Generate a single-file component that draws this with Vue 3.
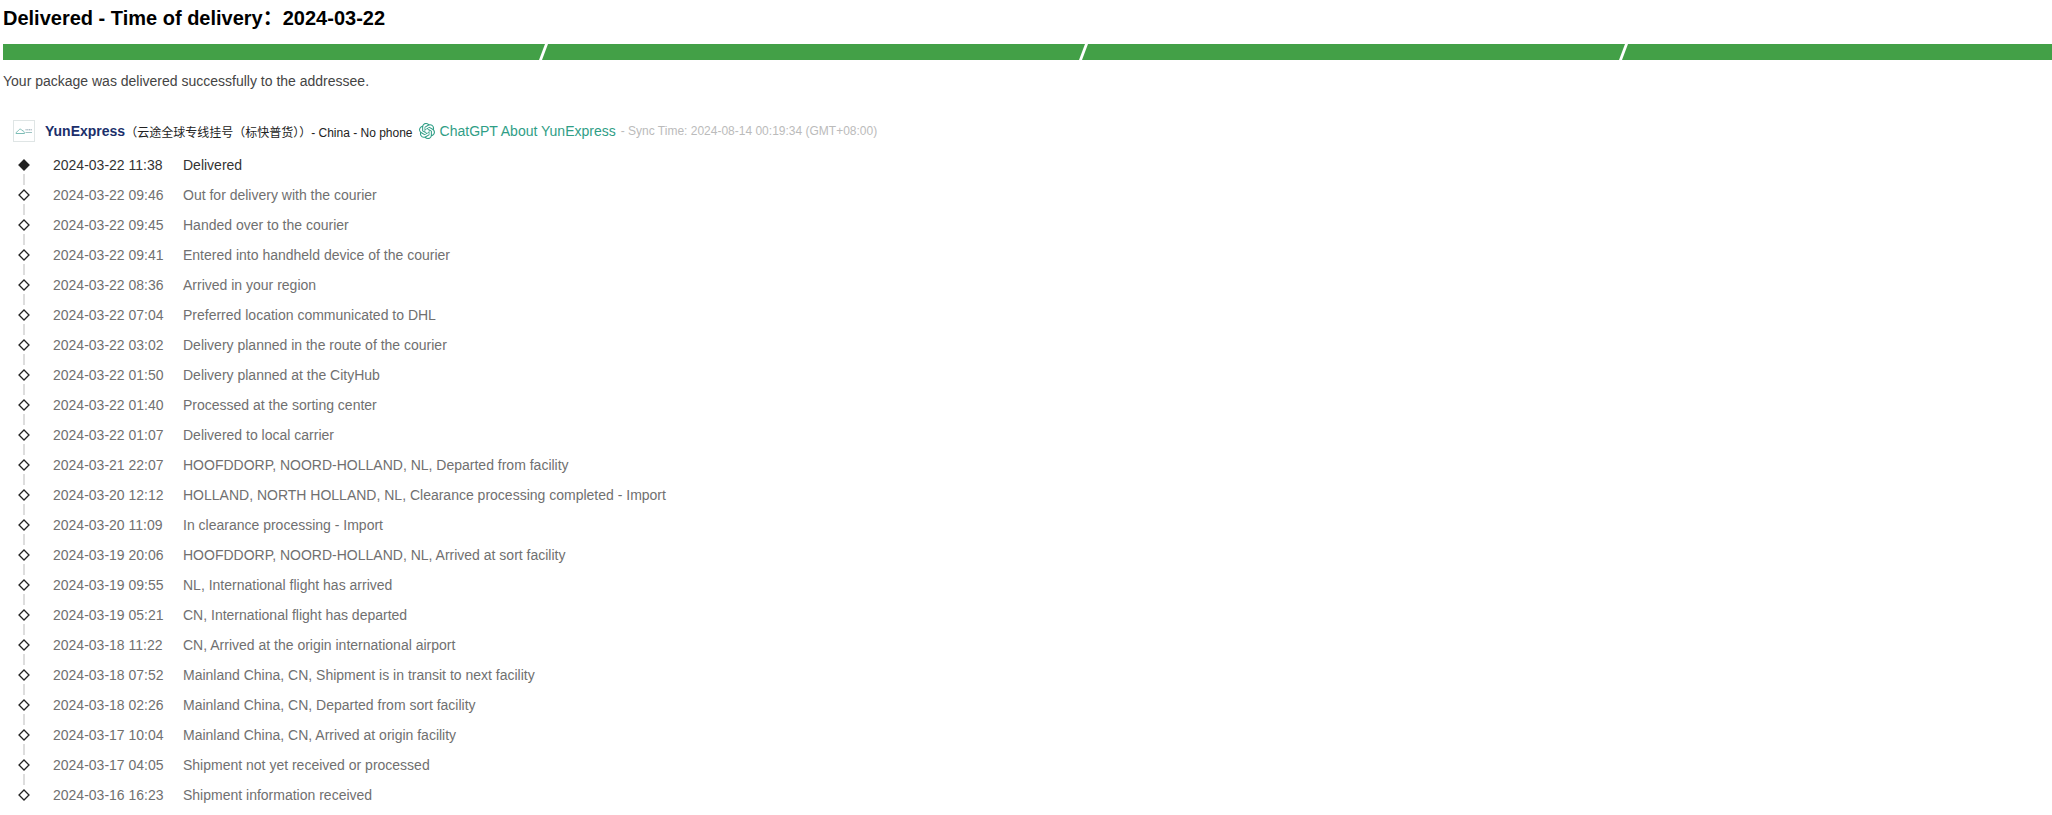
<script setup>
const rows = [
  ['2024-03-22 11:38', 'Delivered'],
  ['2024-03-22 09:46', 'Out for delivery with the courier'],
  ['2024-03-22 09:45', 'Handed over to the courier'],
  ['2024-03-22 09:41', 'Entered into handheld device of the courier'],
  ['2024-03-22 08:36', 'Arrived in your region'],
  ['2024-03-22 07:04', 'Preferred location communicated to DHL'],
  ['2024-03-22 03:02', 'Delivery planned in the route of the courier'],
  ['2024-03-22 01:50', 'Delivery planned at the CityHub'],
  ['2024-03-22 01:40', 'Processed at the sorting center'],
  ['2024-03-22 01:07', 'Delivered to local carrier'],
  ['2024-03-21 22:07', 'HOOFDDORP, NOORD-HOLLAND, NL, Departed from facility'],
  ['2024-03-20 12:12', 'HOLLAND, NORTH HOLLAND, NL, Clearance processing completed - Import'],
  ['2024-03-20 11:09', 'In clearance processing - Import'],
  ['2024-03-19 20:06', 'HOOFDDORP, NOORD-HOLLAND, NL, Arrived at sort facility'],
  ['2024-03-19 09:55', 'NL, International flight has arrived'],
  ['2024-03-19 05:21', 'CN, International flight has departed'],
  ['2024-03-18 11:22', 'CN, Arrived at the origin international airport'],
  ['2024-03-18 07:52', 'Mainland China, CN, Shipment is in transit to next facility'],
  ['2024-03-18 02:26', 'Mainland China, CN, Departed from sort facility'],
  ['2024-03-17 10:04', 'Mainland China, CN, Arrived at origin facility'],
  ['2024-03-17 04:05', 'Shipment not yet received or processed'],
  ['2024-03-16 16:23', 'Shipment information received'],
]
</script>

<template>
  <div class="page">
    <h1 class="title">Delivered - Time of delivery：2024-03-22</h1>
    <div class="bar">
      <div v-for="n in 4" :key="n" class="seg"></div>
    </div>
    <p class="desc">Your package was delivered successfully to the addressee.</p>
    <div class="carrier">
      <span class="logo">
        <svg width="18" height="8" viewBox="0 0 18 8">
          <path d="M1 6.5 C1 4.5 3 4.5 3.5 3.5 C4.5 1.5 6.5 2 7 3.5 C8.5 3.5 9.5 5 9.5 6.5 Z" fill="none" stroke="#7dbdb6" stroke-width="1" />
          <path d="M10.5 2.8h6.5" stroke="#8aa0ad" stroke-width="1" stroke-dasharray="1.2 .5" />
          <path d="M10.5 5.5h6.5" stroke="#9fc4c4" stroke-width="1" />
        </svg>
      </span>
      <a class="name">YunExpress</a>
      <span class="service">（云途全球专线挂号（标快普货））- China - No phone</span>
      <svg class="gpt" width="16" height="16" viewBox="0 0 24 24">
        <path fill="#2f9e86" d="M22.2819 9.8211a5.9847 5.9847 0 0 0-.5157-4.9108 6.0462 6.0462 0 0 0-6.5098-2.9A6.0651 6.0651 0 0 0 4.9807 4.1818a5.9847 5.9847 0 0 0-3.9977 2.9 6.0462 6.0462 0 0 0 .7427 7.0966 5.98 5.98 0 0 0 .511 4.9107 6.051 6.051 0 0 0 6.5146 2.9001A5.9847 5.9847 0 0 0 13.2599 24a6.0557 6.0557 0 0 0 5.7718-4.2058 5.9894 5.9894 0 0 0 3.9977-2.9001 6.0557 6.0557 0 0 0-.7475-7.0729zm-9.022 12.6081a4.4755 4.4755 0 0 1-2.8764-1.0408l.1419-.0804 4.7783-2.7582a.7948.7948 0 0 0 .3927-.6813v-6.7369l2.02 1.1686a.071.071 0 0 1 .038.052v5.5826a4.504 4.504 0 0 1-4.4945 4.4944zm-9.6607-4.1254a4.4708 4.4708 0 0 1-.5346-3.0137l.142.0852 4.783 2.7582a.7712.7712 0 0 0 .7806 0l5.8428-3.3685v2.3324a.0804.0804 0 0 1-.0332.0615L9.74 19.9502a4.4992 4.4992 0 0 1-6.1408-1.6464zM2.3408 7.8956a4.485 4.485 0 0 1 2.3655-1.9728V11.6a.7664.7664 0 0 0 .3879.6765l5.8144 3.3543-2.0201 1.1685a.0757.0757 0 0 1-.071 0l-4.8303-2.7865A4.504 4.504 0 0 1 2.3408 7.872zm16.5963 3.8558L13.1038 8.364 15.1192 7.2a.0757.0757 0 0 1 .071 0l4.8303 2.7913a4.4944 4.4944 0 0 1-.6765 8.1042v-5.6772a.79.79 0 0 0-.407-.667zm2.0107-3.0231l-.142-.0852-4.7735-2.7818a.7759.7759 0 0 0-.7854 0L9.409 9.2297V6.8974a.0662.0662 0 0 1 .0284-.0615l4.8303-2.7866a4.4992 4.4992 0 0 1 6.6802 4.66zM8.3065 12.863l-2.02-1.1638a.0804.0804 0 0 1-.038-.0567V6.0742a4.4992 4.4992 0 0 1 7.3757-3.4537l-.142.0805L8.704 5.459a.7948.7948 0 0 0-.3927.6813zm1.0976-2.3654l2.602-1.4998 2.6069 1.4998v2.9994l-2.5974 1.4997-2.6067-1.4997Z" />
      </svg>
      <a class="gpt-link">ChatGPT About YunExpress</a>
      <span class="sync">- Sync Time: 2024-08-14 00:19:34 (GMT+08:00)</span>
    </div>
    <ul class="list">
      <li v-for="(r, i) in rows" :key="r[0]" class="row" :class="{ first: i === 0 }">
        <span class="track">
          <svg class="dot" width="12" height="12" viewBox="0 0 12 12">
            <polygon points="6,1 11,6 6,11 1,6" :fill="i === 0 ? '#222' : '#fff'" stroke="#222" stroke-width="1.3" />
          </svg>
        </span>
        <span class="time">{{ r[0] }}</span>
        <span class="event">{{ r[1] }}</span>
      </li>
    </ul>
  </div>
</template>

<style>
html, body { margin: 0; padding: 0; background: #fff; overflow: hidden; }
</style>

<style scoped>
.page {
  width: 2052px;
  height: 815px;
  overflow: hidden;
  font-family: "Liberation Sans", "Noto Sans CJK SC", sans-serif;
  font-size: 14px;
  color: #707070;
}
.title {
  margin: 0;
  padding: 7px 0 0 3px;
  height: 44px;
  box-sizing: border-box;
  font-size: 20px;
  line-height: 23px;
  font-weight: 700;
  color: #000;
}
.bar {
  display: flex;
  height: 16px;
  margin-left: 3px;
  overflow: hidden;
}
.seg {
  flex: 0 0 543px;
  height: 16px;
  background: #43a047;
  clip-path: polygon(0 0, 100% 0, calc(100% - 6px) 100%, 0 100%);
}
.seg:first-child { flex-basis: 542px; }
.seg + .seg {
  margin-left: -3px;
  clip-path: polygon(6px 0, 100% 0, calc(100% - 6px) 100%, 0 100%);
}
.desc {
  margin: 0;
  padding: 13px 0 0 3px;
  font-size: 14px;
  line-height: 16px;
  color: #444;
}
.carrier {
  display: flex;
  align-items: center;
  height: 24px;
  margin-top: 30px;
  padding-left: 13px;
  white-space: nowrap;
}
.logo {
  flex: 0 0 22px;
  height: 22px;
  box-sizing: border-box;
  border: 1px solid #dfe5e5;
  display: flex;
  align-items: center;
  justify-content: center;
  margin-right: 10px;
}
.name {
  font-size: 14px;
  font-weight: 700;
  color: #1b2f6b;
}
.service {
  font-size: 12px;
  color: #222;
  margin-right: 6px;
}
.gpt { margin-right: 5px; }
.gpt-link {
  font-size: 14px;
  color: #2f9e86;
  margin-right: 5px;
}
.sync {
  font-size: 12px;
  color: #bbb;
}
.list {
  list-style: none;
  margin: 7px 0 0;
  padding: 0;
}
.row {
  display: flex;
  align-items: center;
  height: 30px;
  white-space: nowrap;
}
.track {
  position: relative;
  flex: 0 0 53px;
  height: 30px;
}
.dot {
  position: absolute;
  left: 18px;
  top: 9px;
}
.row:not(:last-child) .track::after {
  content: "";
  position: absolute;
  left: 23px;
  top: 24px;
  width: 2px;
  height: 11px;
  background: #ddd;
}
.time { flex: 0 0 130px; }
.first .time, .first .event { color: #333; }
</style>
